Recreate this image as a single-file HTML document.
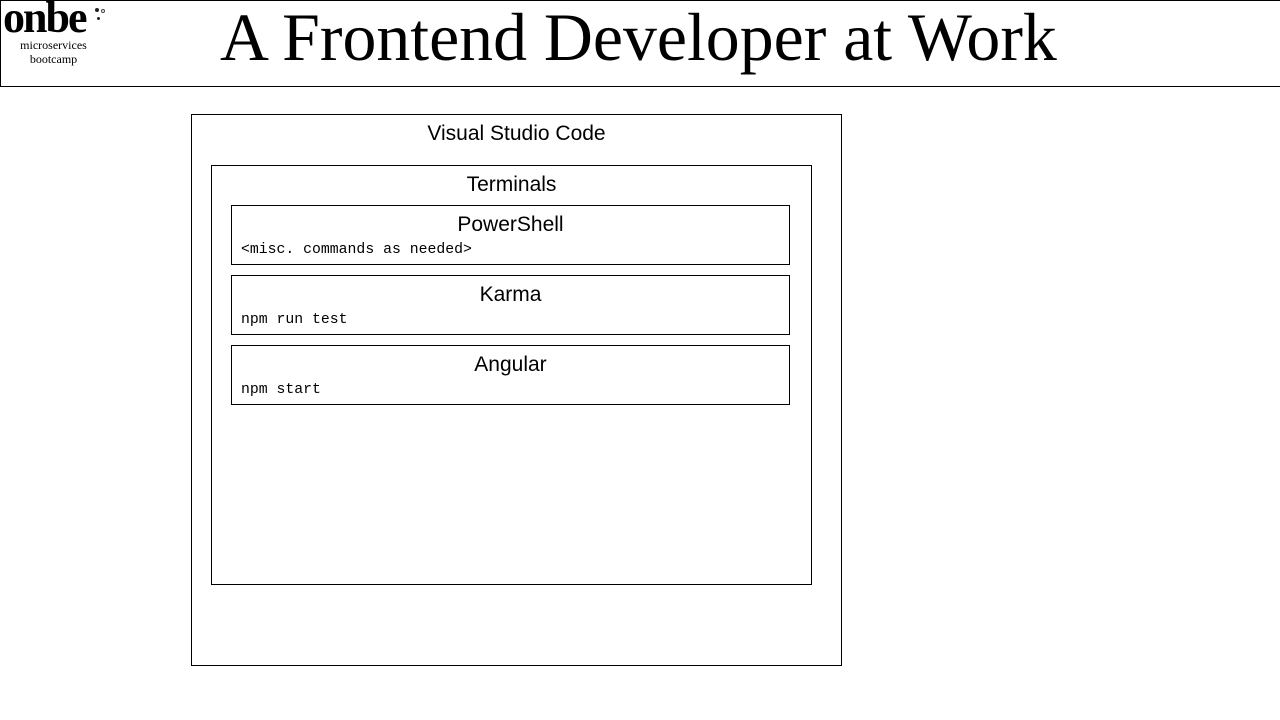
<!DOCTYPE html>
<html><head><style>
body{margin:0;width:1280px;height:720px;background:#fff;position:relative;overflow:hidden;font-family:"Liberation Sans",sans-serif;}
.b{position:absolute;border:1px solid #000;box-sizing:border-box;}
.t{position:absolute;left:0;right:0;text-align:center;font-size:21px;color:#000;}
.m{position:absolute;left:9px;font-family:"Liberation Mono",monospace;font-size:14.8px;}
</style></head><body>
<div class="b" style="left:0;top:0;width:1282px;height:87px;"></div>
<div style="position:absolute;left:3px;top:-4px;font-family:'Liberation Serif',serif;font-weight:bold;font-size:44px;letter-spacing:-2px;line-height:1;">onbe</div>
<div style="position:absolute;left:95px;top:8px;width:4px;height:4px;border-radius:50%;background:#222"></div>
<div style="position:absolute;left:97px;top:17px;width:3px;height:3px;border-radius:50%;background:#222"></div>
<div style="position:absolute;left:101px;top:9px;width:4px;height:4px;border-radius:50%;border:1px solid #444;box-sizing:border-box"></div>
<div style="position:absolute;left:0;width:107px;top:38px;text-align:center;font-family:'Liberation Serif',serif;font-size:12px;line-height:14px;">microservices<br>bootcamp</div>
<div style="position:absolute;left:220px;top:-4px;font-family:'Liberation Serif',serif;font-size:67.8px;line-height:84px;white-space:nowrap;">A Frontend Developer at Work</div>
<div class="b" style="left:191px;top:114px;width:651px;height:552px;"><div class="t" style="top:7px">Visual Studio Code</div></div>
<div class="b" style="left:211px;top:165px;width:601px;height:420px;"><div class="t" style="top:7px">Terminals</div></div>
<div class="b" style="left:231px;top:205px;width:559px;height:60px;"><div class="t" style="top:7px">PowerShell</div><div class="m" style="top:36px">&lt;misc. commands as needed&gt;</div></div>
<div class="b" style="left:231px;top:275px;width:559px;height:60px;"><div class="t" style="top:7px">Karma</div><div class="m" style="top:36px">npm run test</div></div>
<div class="b" style="left:231px;top:345px;width:559px;height:60px;"><div class="t" style="top:7px">Angular</div><div class="m" style="top:36px">npm start</div></div>
</body></html>
